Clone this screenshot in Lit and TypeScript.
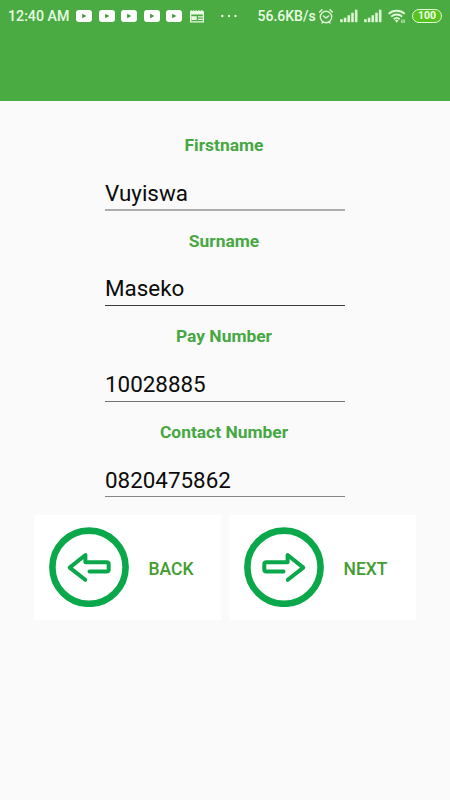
import { LitElement, html, css, svg } from "lit";
import { customElement, property } from "lit/decorators.js";

@customElement("status-bar")
class StatusBar extends LitElement {
  static styles = css`
    :host {
      display: flex;
      align-items: center;
      height: 32px;
      padding-left: 8px;
      color: #e9fbe2;
      font: 500 14.2px/16px Roboto, sans-serif;
    }
    svg { display: block; flex: none; overflow: visible; }
    .time { width: 68px; white-space: nowrap; }
    .videos { display: flex; gap: 6.5px; }
    .news { margin-left: 8px; }
    .dots { margin-left: 17px; }
    .speed { width: 58px; margin-left: 20.5px; white-space: nowrap; font-size: 14px; }
    .alarm { margin-left: 3.5px; }
    .signal { margin-left: 6.5px; }
    .wifi { margin-left: 6px; }
    .battery {
      box-sizing: border-box;
      width: 30px;
      height: 14px;
      margin-left: 6px;
      border: 1.5px solid #e4fbd9;
      border-radius: 7px;
      background: #55c51d;
      color: #f4ffee;
      font: 700 10.5px/12px Roboto, sans-serif;
      text-align: center;
    }
  `;

  private video() {
    return html`<svg width="16" height="12" viewBox="0 0 16 12">
      <rect width="16" height="12" rx="3" fill="#fff" />
      <path d="M6.2 3.7 10.3 6 6.2 8.3z" fill="#3e9238" />
    </svg>`;
  }

  private signal() {
    return html`<svg class="signal" width="18" height="13" viewBox="0 0 18 13">
      ${[3, 4.5, 7, 9.5, 12.5].map(
        (h, i) => svg`<rect x=${0.1 + i * 3.7} y=${12.2 - h} width="2.6" height=${h} fill="#dcf5d2" />`
      )}
    </svg>`;
  }

  render() {
    return html`
      <span class="time">12:40 AM</span>
      <div class="videos">${[0, 1, 2, 3, 4].map(() => this.video())}</div>
      <svg class="news" width="14" height="13" viewBox="0 0 14 13" fill="#e9fbe2">
        <path fill-rule="evenodd" d="M0 1.5 1.2 0 2.5 1.2 3.8 0 5 1.2 6.3 0 7.6 1.2 8.9 0 10.2 1.2 11.5 0 14 1.5V12.5H0zM1.3 4.5v6.8h11.4V4.5z" />
        <path d="M1.3 6.2h5.5v3.8h-5.5zM8 6.2h4.7v1.3H8zM8 8.8h4.7v1.2H8z" />
      </svg>
      <svg class="dots" width="16" height="3" viewBox="0 0 16 3" fill="#e9fbe2">
        <circle cx="1.3" cy="1" r="1.2" /><circle cx="8" cy="1" r="1.2" /><circle cx="14.5" cy="1" r="1.2" />
      </svg>
      <span class="speed">56.6KB/s</span>
      <svg class="alarm" width="14" height="15" viewBox="0 0 14 15" fill="none" stroke="#dff6d6" stroke-width="1.4" stroke-linecap="round">
        <circle cx="7" cy="8" r="5.7" /><path d="M.6 3 3 .8M11 .8 13.4 3M4.6 7 7 9l2.6-2M4 13l-1 1M10 13l1 1" />
      </svg>
      ${this.signal()}${this.signal()}
      <svg class="wifi" width="18" height="14" viewBox="0 0 18 14" fill="none" stroke="#e4fbd9" stroke-width="1.8">
        <path d="M.7 4.8a12 12 0 0 1 16 0M3.2 7.6a8.2 8.2 0 0 1 11 0M5.7 10.2a4.6 4.6 0 0 1 6 0" />
        <path d="M6.8 11.3 8.7 13.8l1.9-2.5q-1.9-1.3-3.8 0z" fill="#e4fbd9" stroke="none" />
        <path d="M13.9 10.5v3.5M16.1 10.5v3.5" stroke-width="1" />
      </svg>
      <div class="battery">100</div>
    `;
  }
}

@customElement("form-field")
class FormField extends LitElement {
  @property() label = "";
  @property() value = "";

  static styles = css`
    :host {
      display: flex;
      flex-direction: column;
      width: 240px;
      height: 95.67px;
      font-family: Roboto, sans-serif;
    }
    .label {
      height: 24px;
      padding-right: 2px;
      color: #46a743;
      font-size: 17.4px;
      font-weight: 700;
      line-height: 24px;
      text-align: center;
      white-space: nowrap;
    }
    .value {
      height: var(--value-height, 33px);
      margin-top: 19px;
      color: #0b0b0b;
      font-size: 22.4px;
      line-height: var(--value-line, 34px);
      white-space: nowrap;
    }
    .line { height: var(--thickness, 1px); background: var(--line, #777); }
  `;

  render() {
    return html`
      <div class="label">${this.label}</div>
      <div class="value">${this.value}</div>
      <div class="line"></div>
    `;
  }
}

@customElement("nav-button")
class NavButton extends LitElement {
  @property() label = "";
  @property() direction = "right";

  static styles = css`
    :host {
      display: flex;
      align-items: center;
      box-sizing: border-box;
      width: 187px;
      height: 105px;
      padding-left: 15px;
      background: #fff;
      color: #449c31;
      font: 500 17.5px/20px Roboto, sans-serif;
    }
    svg { display: block; flex: none; }
    span { margin: 3px 0 0 19.5px; }
  `;

  render() {
    const flip = this.direction === "left" ? "translate(80 0) scale(-1 1)" : "";
    return html`
      <svg width="80" height="80" viewBox="0 0 80 80" fill="none" stroke="#0aa84b">
        <circle cx="40" cy="40.2" r="36.6" stroke-width="6.6" />
        <path
          transform=${flip}
          d="M39.5 44.6H22.5Q20.3 44.6 20.3 42.6V37.2Q20.3 35.2 22.5 35.2H43.6V28L59.3 40.6 43.8 52.8"
          stroke-width="4"
          stroke-linecap="round"
          stroke-linejoin="round"
        />
      </svg>
      <span>${this.label}</span>
    `;
  }
}

@customElement("app-root")
class AppRoot extends LitElement {
  static styles = css`
    :host {
      display: flex;
      flex-direction: column;
      height: 800px;
      background: #fafafa;
      overflow: hidden;
    }
    header { height: 101px; flex: none; background: #4aab43; }
    form { display: flex; flex-direction: column; align-items: center; padding-top: 32px; }
    .first { --line: #adadad; --thickness: 2px; }
    .second { --line: #3c3c3c; --value-line: 32px; }
    .third { --line: #747474; --value-height: 33.5px; }
    .fourth { --line: #858585; height: 77px; }
    nav { display: flex; justify-content: center; gap: 8px; margin-top: 18px; }
  `;

  render() {
    return html`
      <header><status-bar></status-bar></header>
      <form>
        <form-field class="first" label="Firstname" value="Vuyiswa"></form-field>
        <form-field class="second" label="Surname" value="Maseko"></form-field>
        <form-field class="third" label="Pay Number" value="10028885"></form-field>
        <form-field class="fourth" label="Contact Number" value="0820475862"></form-field>
      </form>
      <nav>
        <nav-button label="BACK" direction="left"></nav-button>
        <nav-button label="NEXT" direction="right"></nav-button>
      </nav>
    `;
  }
}
